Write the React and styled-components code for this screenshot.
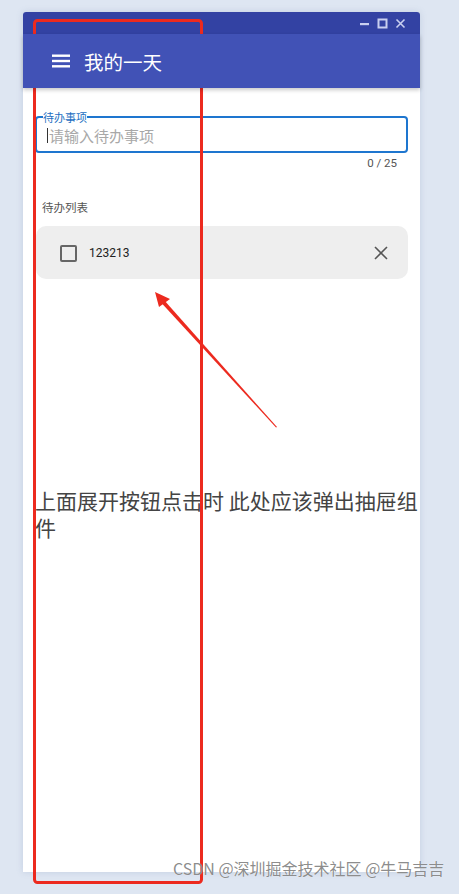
import React from "react";
import styled, { createGlobalStyle } from "styled-components";

const GlobalStyle = createGlobalStyle`
  html, body {
    margin: 0;
    padding: 0;
    background: #dee6f2;
    font-family: "Noto Sans CJK SC", "Noto Sans", sans-serif;
  }
`;

const Page = styled.div`
  position: relative;
  width: 459px;
  height: 894px;
  padding: 12px 0 0 23px;
  box-sizing: border-box;
  overflow: hidden;
`;

const Window = styled.div`
  width: 397px;
  height: 860px;
  background: #fff;
  border-radius: 3px 3px 0 0;
  display: flex;
  flex-direction: column;
  box-shadow: 0 0 6px rgba(120, 140, 180, 0.25);
`;

const TitleBar = styled.div`
  height: 22px;
  background: #3342a3;
  border-radius: 3px 3px 0 0;
  display: flex;
  align-items: center;
  justify-content: flex-end;
  gap: 7px;
  padding-right: 14px;
`;

const AppBar = styled.div`
  height: 54px;
  background: #4152b6;
  display: flex;
  align-items: center;
  padding-left: 29px;
  gap: 13px;
  box-shadow: 0 2px 4px rgba(0, 0, 0, 0.22);
  position: relative;
  z-index: 1;
`;

const AppTitle = styled.div`
  color: #fff;
  font-size: 19.5px;
`;

const Content = styled.div`
  padding: 28px 12px 0 12px;
  display: flex;
  flex-direction: column;
`;

const Field = styled.div`
  position: relative;
  height: 37px;
  border: 2px solid #1e76cf;
  border-radius: 4px;
  box-sizing: border-box;
  display: flex;
  align-items: center;
  padding-left: 10px;
`;

const FieldLabel = styled.span`
  position: absolute;
  left: 6px;
  top: -7px;
  font-size: 11px;
  line-height: 12px;
  color: #1e6fc2;
  background: linear-gradient(to bottom, transparent 45%, #fff 45%, #fff 60%, transparent 60%);
`;

const Caret = styled.span`
  width: 1px;
  height: 15px;
  background: #333;
  margin-right: 1px;
  margin-top: 2px;
`;

const Placeholder = styled.span`
  font-size: 15px;
  color: #a8a8a8;
  margin-top: 1px;
`;

const Counter = styled.div`
  text-align: right;
  font-family: Roboto, "Noto Sans", sans-serif;
  font-size: 11.5px;
  color: #555;
  padding-right: 11px;
  margin-top: 3px;
  line-height: 14px;
`;

const SectionLabel = styled.div`
  font-size: 11.5px;
  color: #555;
  margin: 30px 0 0 7px;
  line-height: 14px;
`;

const Item = styled.div`
  margin: 12px 0 0 1px;
  height: 53px;
  background: #eeeeee;
  border-radius: 10px;
  display: flex;
  align-items: center;
  padding: 0 19px 0 24px;
`;

const Check = styled.span`
  width: 13px;
  height: 13px;
  border: 2px solid #666;
  border-radius: 2px;
  margin-top: 1px;
`;

const ItemText = styled.span`
  font-family: Roboto, "Noto Sans", sans-serif;
  font-size: 12px;
  color: #222;
  margin-left: 12px;
  flex: 1;
`;

const Note = styled.div`
  margin-top: 208px;
  width: 390px;
  font-size: 21px;
  line-height: 27px;
  color: #444;
`;

const Annotation = styled.svg`
  position: absolute;
  left: 0;
  top: 0;
  pointer-events: none;
`;

const Watermark = styled.div`
  position: absolute;
  left: 173px;
  top: 856px;
  font-size: 16px;
  color: rgba(110, 110, 110, 0.8);
  text-shadow: 0 0 1px #fff;
  white-space: nowrap;
`;

export default function App() {
  return (
    <Page>
      <GlobalStyle />
      <Window>
        <TitleBar>
          <svg width="11" height="11" viewBox="0 0 11 11">
            <rect x="1" y="5" width="9" height="2.2" fill="#c9cff0" />
          </svg>
          <svg width="11" height="11" viewBox="0 0 11 11">
            <rect x="1.5" y="1.5" width="8" height="8" fill="none" stroke="#c9cff0" strokeWidth="2" />
          </svg>
          <svg width="11" height="11" viewBox="0 0 11 11">
            <path d="M1.5 1.5 L9.5 9.5 M9.5 1.5 L1.5 9.5" stroke="#c9cff0" strokeWidth="1.6" />
          </svg>
        </TitleBar>
        <AppBar>
          <svg width="19" height="14" viewBox="0 0 19 14">
            <rect x="0" y="0.5" width="18" height="2.4" fill="#fff" />
            <rect x="0" y="5.8" width="18" height="2.4" fill="#fff" />
            <rect x="0" y="11.1" width="18" height="2.4" fill="#fff" />
          </svg>
          <AppTitle>我的一天</AppTitle>
        </AppBar>
        <Content>
          <Field>
            <FieldLabel>待办事项</FieldLabel>
            <Caret />
            <Placeholder>请输入待办事项</Placeholder>
          </Field>
          <Counter>0 / 25</Counter>
          <SectionLabel>待办列表</SectionLabel>
          <Item>
            <Check />
            <ItemText>123213</ItemText>
            <svg width="16" height="16" viewBox="0 0 16 16">
              <path d="M2 2 L14 14 M14 2 L2 14" stroke="#555" strokeWidth="1.6" />
            </svg>
          </Item>
          <Note>上面展开按钮点击时 此处应该弹出抽屉组件</Note>
        </Content>
      </Window>
      <Annotation width="459" height="894" viewBox="0 0 459 894">
        <rect x="34.5" y="20.5" width="167" height="862" rx="3" fill="none" stroke="#ec2a1f" strokeWidth="3" />
        <polygon points="277,427 164,300 161.5,303 276,427.5" fill="#ec2a1f" />
        <polygon points="155,292 170,299 159,307" fill="#ec2a1f" />
      </Annotation>
      <Watermark>CSDN @深圳掘金技术社区 @牛马吉吉</Watermark>
    </Page>
  );
}
